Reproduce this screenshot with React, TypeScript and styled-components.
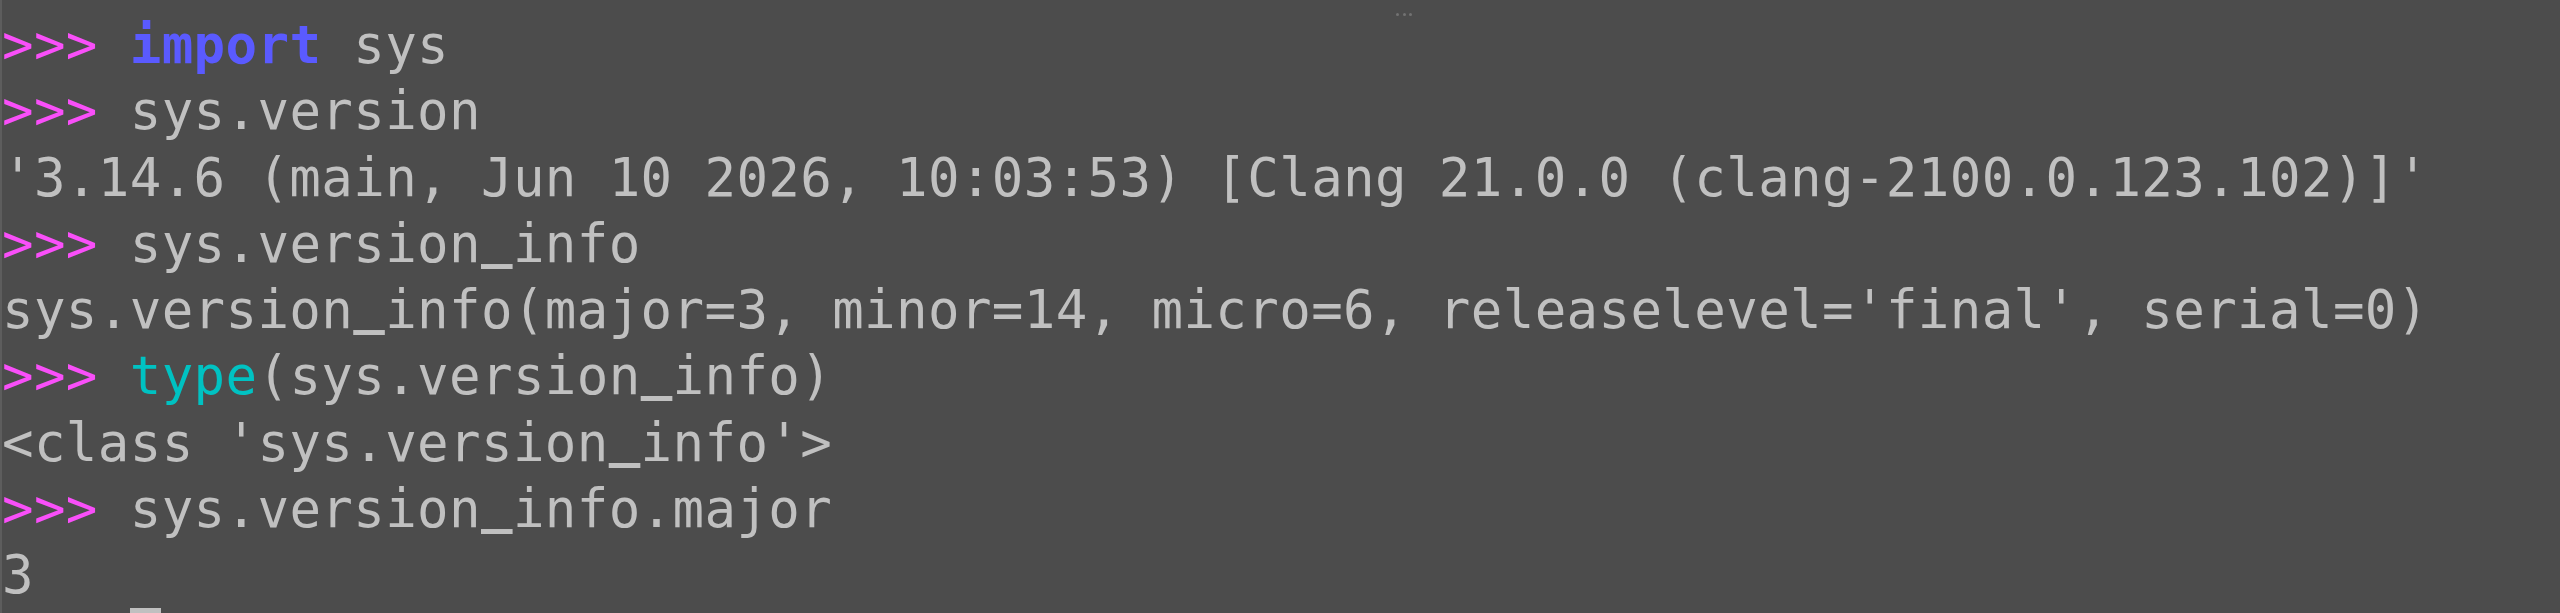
import React from "react";
import styled, { createGlobalStyle } from "styled-components";

const Global = createGlobalStyle`
  html, body {
    margin: 0;
    padding: 0;
    background: #4c4c4c;
    height: 100%;
    overflow: hidden;
  }
  #root { height: 100%; }
`;

const Terminal = styled.div`
  position: relative;
  box-sizing: border-box;
  height: 613px;
  overflow: hidden;
  background: #4c4c4c;
  border-left: 2px solid #5d5d5d;
  padding-top: 12px;
  font-family: "DejaVu Sans Mono", "Liberation Mono", monospace;
  font-size: 52.45px;
  letter-spacing: 0.36px;
  line-height: 66.25px;
  color: #c0c0c0;
  white-space: pre;
`;

const Line = styled.div`
  height: 66.25px;
`;

type Tone = "prompt" | "keyword" | "builtin" | "plain";

const tones: Record<Tone, string> = {
  prompt: "#f94ff9",
  keyword: "#5a5aff",
  builtin: "#00c2c2",
  plain: "#c0c0c0",
};

const Tok = styled.span<{ $tone: Tone; $bold?: boolean }>`
  color: ${(p) => tones[p.$tone]};
  font-weight: ${(p) => (p.$bold ? 700 : 400)};
`;

const Under = styled.span`
  font-weight: 700;
  line-height: 0;
  vertical-align: 0.11em;
`;

const Cursor = styled.span`
  display: inline-block;
  width: 1ch;
  height: 66.25px;
  vertical-align: top;
  background: #c0c0c0;
`;

const Handle = styled.div`
  position: absolute;
  top: 13px;
  left: 1394px;
  display: flex;
  gap: 3.5px;
`;

const Dot = styled.span`
  width: 3px;
  height: 3px;
  border-radius: 50%;
  background: #727272;
`;

const Prompt = () => <Tok $tone="prompt">{">>> "}</Tok>;

const Code = ({ text }: { text: string }) => {
  const parts = text.split("_");
  return (
    <Tok $tone="plain">
      {parts.map((p, i) => (
        <React.Fragment key={i}>
          {i > 0 && <Under>_</Under>}
          {p}
        </React.Fragment>
      ))}
    </Tok>
  );
};

export default function App() {
  return (
    <>
      <Global />
      <Terminal>
        <Handle>
          <Dot />
          <Dot />
          <Dot />
        </Handle>
        <Line>
          <Prompt />
          <Tok $tone="keyword" $bold>import</Tok>
          <Code text=" sys" />
        </Line>
        <Line>
          <Prompt />
          <Code text="sys.version" />
        </Line>
        <Line>
          <Code text="'3.14.6 (main, Jun 10 2026, 10:03:53) [Clang 21.0.0 (clang-2100.0.123.102)]'" />
        </Line>
        <Line>
          <Prompt />
          <Code text="sys.version_info" />
        </Line>
        <Line>
          <Code text="sys.version_info(major=3, minor=14, micro=6, releaselevel='final', serial=0)" />
        </Line>
        <Line>
          <Prompt />
          <Tok $tone="builtin">type</Tok>
          <Code text="(sys.version_info)" />
        </Line>
        <Line>
          <Code text="<class 'sys.version_info'>" />
        </Line>
        <Line>
          <Prompt />
          <Code text="sys.version_info.major" />
        </Line>
        <Line>
          <Code text="3" />
        </Line>
        <Line>
          <Prompt />
          <Cursor />
        </Line>
      </Terminal>
    </>
  );
}
